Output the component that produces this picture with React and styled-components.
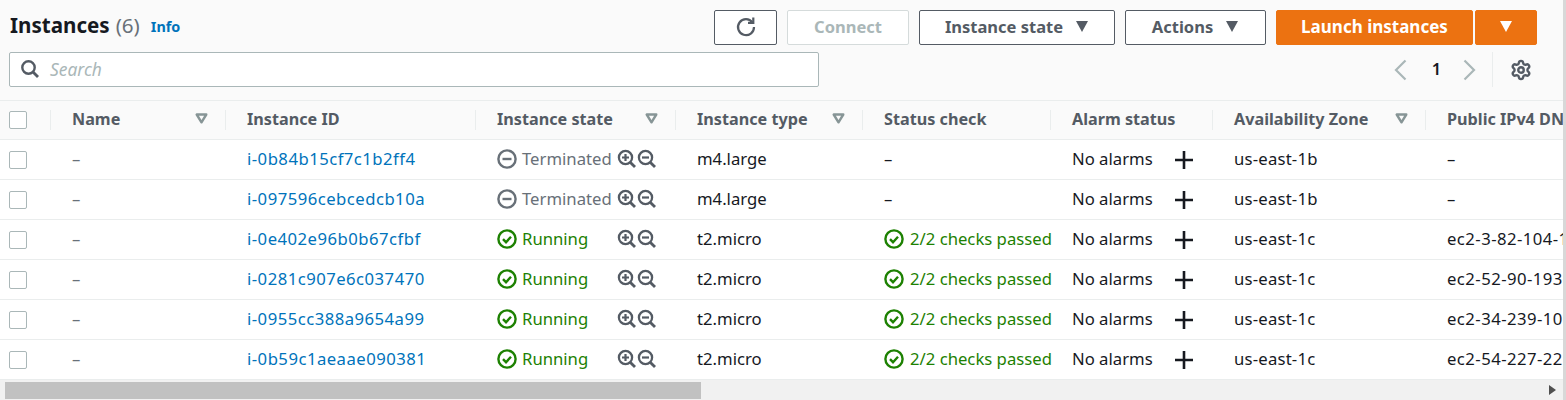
import React from "react";
import styled, { createGlobalStyle } from "styled-components";
import { Settings } from "lucide-react";

const Global = createGlobalStyle`
  html, body { margin: 0; padding: 0; background: #fff; }
  body { font-family: "Noto Sans", "Open Sans", sans-serif; width: 1566px; height: 400px; overflow: hidden; }
`;

const Page = styled.div`
  width: 1566px;
  height: 400px;
  display: flex;
  flex-direction: column;
  overflow: hidden;
  position: relative;
`;
const Head = styled.div`
  height: 100px;
  flex: none;
  box-sizing: border-box;
  background: #fafafa;
  padding: 10px 29px 0 9px;
  display: flex;
  flex-direction: column;
  gap: 7px;
`;
const HeadLine = styled.div`
  display: flex;
  justify-content: space-between;
  align-items: flex-start;
  height: 35px;
`;
const TitleRow = styled.div`
  display: flex;
  align-items: center;
  height: 30px;
  padding-left: 1px;
`;
const Title = styled.h1`
  margin: 0;
  font-size: 20.6px;
  font-weight: 700;
  color: #16191f;
`;
const Count = styled.span`
  font-weight: 400;
  color: #687078;
  margin-left: 6px;
`;
const Info = styled.a`
  font-size: 14.4px;
  font-weight: 700;
  color: #0073bb;
  margin-left: 11px;
  position: relative;
  top: 1px;
`;
const Actions = styled.div`
  display: flex;
  gap: 10px;
  align-items: flex-start;
`;
const Btn = styled.button`
  box-sizing: border-box;
  height: 35px;
  width: ${(p) => p.$w}px;
  margin: 0;
  padding: 0 0 2px;
  font: 700 ${(p) => (p.$primary ? 17 : 16.5)}px "Noto Sans", sans-serif;
  color: ${(p) => (p.$primary ? "#fff" : p.$disabled ? "#aab7b8" : "#545b64")};
  background: ${(p) => (p.$primary ? "#ec7211" : "#fff")};
  border: 1px solid ${(p) => (p.$primary ? "#ec7211" : p.$disabled ? "#d5dbdb" : "#545b64")};
  border-radius: 2px;
  display: flex;
  align-items: center;
  justify-content: center;
  gap: 12px;
`;
const PrimaryGroup = styled.div`
  display: flex;
  gap: 2px;
`;
const SearchBox = styled.div`
  width: 810px;
  height: 35px;
  box-sizing: border-box;
  background: #fff;
  border: 1px solid #aab7b8;
  border-radius: 2px;
  display: flex;
  align-items: center;
  padding: 0 0 2px 10px;
  gap: 10px;
  font-size: 17.4px;
  font-style: italic;
  color: #aab7b8;
`;
const Pager = styled.div`
  display: flex;
  align-items: center;
  height: 35px;
  padding-right: 5px;
  color: #16191f;
  font-size: 16.5px;
  font-weight: 600;
`;
const PageNum = styled.span`
  width: 56px;
  box-sizing: border-box;
  padding-left: 3px;
  text-align: center;
  position: relative;
  top: -1px;
`;
const PagerDivider = styled.span`
  width: 1px;
  height: 35px;
  background: #eaeded;
  margin: 0 17px 0 15px;
`;
const HeaderRow = styled.div`
  display: grid;
  flex: none;
  grid-template-columns: ${(p) => p.$cols};
  height: 40px;
  box-sizing: border-box;
  background: #fafafa;
  border-top: 1px solid #eaeded;
  border-bottom: 1px solid #eaeded;
  width: 1700px;
`;
const HeadCell = styled.div`
  display: flex;
  align-items: center;
  justify-content: space-between;
  padding: 0 18px 3px 21px;
  font-size: 16.2px;
  font-weight: 700;
  color: #545b64;
  position: relative;
  white-space: nowrap;
  &::before {
    content: "";
    position: absolute;
    left: -1px;
    top: 9px;
    bottom: 9px;
    width: 1px;
    background: #eaeded;
  }
`;
const Row = styled.div`
  display: grid;
  flex: none;
  grid-template-columns: ${(p) => p.$cols};
  height: 40px;
  box-sizing: border-box;
  border-bottom: 1px solid #eaeded;
  background: #fff;
  width: 1700px;
  &:last-of-type { border-bottom: 0; }
`;
const Cell = styled.div`
  display: flex;
  align-items: center;
  padding: 0 0 2px 21px;
  font-size: 16.7px;
  letter-spacing: ${(p) => p.$track || 0}px;
  color: ${(p) => p.$color || "#16191f"};
  white-space: nowrap;
  gap: ${(p) => p.$gap || 0}px;
`;
const CheckCell = styled.div`
  display: flex;
  align-items: center;
  padding-left: 9px;
`;
const Box = styled.span`
  width: 18px;
  height: 18px;
  box-sizing: border-box;
  background: #fff;
  border: 1px solid #aab7b8;
  border-radius: 2px;
  display: block;
`;
const StateText = styled.span`
  width: 92px;
  margin-left: 5px;
  flex: none;
`;
const Zooms = styled.span`
  display: flex;
  margin-left: 3px;
`;
const AlarmText = styled.span`
  width: 102px;
  flex: none;
`;
const PlusWrap = styled.span`
  display: flex;
  margin-top: 2px;
`;
const Track = styled.div`
  height: 20px;
  flex: none;
  background: #f1f1f1;
  display: flex;
  align-items: center;
  padding-left: 5px;
  position: relative;
`;
const Thumb = styled.div`
  width: 696px;
  height: 17px;
  background: #c1c1c1;
`;
const Arrow = styled.svg`
  position: absolute;
  left: 1549px;
  top: 5px;
`;
const VEdge = styled.div`
  position: absolute;
  right: 0;
  top: 0;
  bottom: 0;
  width: 3px;
  background: #d8d8d8;
`;

const COLS = "51px 175px 250px 200px 187px 188px 162px 213px 273px";

const Caret = ({ color = "#545b64" }) => (
  <svg width="14" height="11" viewBox="0 0 14 11"><path d="M1 0h12L7 11z" fill={color} /></svg>
);
const SortIcon = () => (
  <svg width="13" height="11" viewBox="0 0 13 11" style={{ flex: "none" }}>
    <path d="M1.7 1.5h9.6L6.5 9.3z" fill="none" stroke="#879596" strokeWidth="2.4" strokeLinejoin="round" />
  </svg>
);
const Check = () => (
  <svg width="20" height="20" viewBox="0 0 20 20" style={{ flex: "none" }}>
    <circle cx="10" cy="10" r="8.6" fill="none" stroke="#1d8102" strokeWidth="2.4" />
    <path d="M6 10.2l3 3 5-5.4" fill="none" stroke="#1d8102" strokeWidth="2.4" />
  </svg>
);
const Minus = () => (
  <svg width="20" height="20" viewBox="0 0 20 20" style={{ flex: "none" }}>
    <circle cx="10" cy="10" r="8.6" fill="none" stroke="#687078" strokeWidth="2.4" />
    <path d="M5.5 10h9" fill="none" stroke="#687078" strokeWidth="2.4" />
  </svg>
);
const ZoomIcon = ({ plus }) => (
  <svg width="20" height="20" viewBox="0 0 20 20" style={{ flex: "none" }}>
    <circle cx="8.5" cy="8.5" r="6.6" fill="none" stroke="#545b64" strokeWidth="2.3" />
    <path d="M13.4 13.4L18 18" fill="none" stroke="#545b64" strokeWidth="2.8" />
    <path d={plus ? "M5 8.5h7M8.5 5v7" : "M5 8.5h7"} fill="none" stroke="#545b64" strokeWidth="2.2" />
  </svg>
);
const Plus = () => (
  <svg width="20" height="20" viewBox="0 0 20 20" style={{ flex: "none" }}>
    <path d="M10 1v18M1 10h18" fill="none" stroke="#16191f" strokeWidth="2.6" />
  </svg>
);

const rows = [
  ["i-0b84b15cf7c1b2ff4", "Terminated", "m4.large", null, "us-east-1b", "–"],
  ["i-097596cebcedcb10a", "Terminated", "m4.large", null, "us-east-1b", "–"],
  ["i-0e402e96b0b67cfbf", "Running", "t2.micro", "2/2 checks passed", "us-east-1c", "ec2-3-82-104-143"],
  ["i-0281c907e6c037470", "Running", "t2.micro", "2/2 checks passed", "us-east-1c", "ec2-52-90-193-10"],
  ["i-0955cc388a9654a99", "Running", "t2.micro", "2/2 checks passed", "us-east-1c", "ec2-34-239-106-2"],
  ["i-0b59c1aeaae090381", "Running", "t2.micro", "2/2 checks passed", "us-east-1c", "ec2-54-227-221-3"],
];

const heads = [
  ["Name", true], ["Instance ID", false], ["Instance state", true], ["Instance type", true],
  ["Status check", false], ["Alarm status", false], ["Availability Zone", true], ["Public IPv4 DNS", false],
];

export default function App() {
  return (
    <Page>
      <Global />
      <Head>
        <HeadLine>
          <TitleRow>
            <Title>Instances<Count>(6)</Count></Title>
            <Info>Info</Info>
          </TitleRow>
          <Actions>
            <Btn $w={63}>
              <svg width="22" height="22" viewBox="0 0 22 22">
                <path d="M17.5 6.5A8 8 0 1 0 19 11" fill="none" stroke="#545b64" strokeWidth="2.2" />
                <path d="M13 6.8h5.3V1.5" fill="none" stroke="#545b64" strokeWidth="2.2" />
              </svg>
            </Btn>
            <Btn $w={122} $disabled>Connect</Btn>
            <Btn $w={196}>Instance state <Caret /></Btn>
            <Btn $w={141}>Actions <Caret /></Btn>
            <PrimaryGroup>
              <Btn $w={197} $primary>Launch instances</Btn>
              <Btn $w={62} $primary><Caret color="#fff" /></Btn>
            </PrimaryGroup>
          </Actions>
        </HeadLine>
        <HeadLine>
          <SearchBox>
            <svg width="20" height="20" viewBox="0 0 20 20" style={{ flex: "none" }}>
              <circle cx="8.5" cy="8.5" r="6.2" fill="none" stroke="#545b64" strokeWidth="2.4" />
              <path d="M13 13l5 5" fill="none" stroke="#545b64" strokeWidth="2.8" />
            </svg>
            Search
          </SearchBox>
          <Pager>
            <svg width="14" height="22" viewBox="0 0 14 22"><path d="M12.5 1.5L3 11l9.5 9.5" fill="none" stroke="#aab7b8" strokeWidth="2.2" /></svg>
            <PageNum>1</PageNum>
            <svg width="14" height="22" viewBox="0 0 14 22"><path d="M1.5 1.5L11 11l-9.5 9.5" fill="none" stroke="#aab7b8" strokeWidth="2.2" /></svg>
            <PagerDivider />
            <Settings size={22} color="#545b64" strokeWidth={2.6} />
          </Pager>
        </HeadLine>
      </Head>
      <HeaderRow $cols={COLS}>
        <CheckCell><Box /></CheckCell>
        {heads.map(([t, s]) => (
          <HeadCell key={t}>{t}{s && <SortIcon />}</HeadCell>
        ))}
      </HeaderRow>
      {rows.map((r) => {
        const run = r[1] === "Running";
        return (
          <Row key={r[0]} $cols={COLS}>
            <CheckCell><Box /></CheckCell>
            <Cell $color="#687078">–</Cell>
            <Cell $color="#0073bb" $track={0.47}>{r[0]}</Cell>
            <Cell $color={run ? "#1d8102" : "#687078"}>
              {run ? <Check /> : <Minus />}
              <StateText>{r[1]}</StateText>
              <Zooms><ZoomIcon plus /><ZoomIcon /></Zooms>
            </Cell>
            <Cell>{r[2]}</Cell>
            {r[3] ? <Cell $color="#1d8102" $gap={6}><Check />{r[3]}</Cell> : <Cell>–</Cell>}
            <Cell><AlarmText>No alarms</AlarmText><PlusWrap><Plus /></PlusWrap></Cell>
            <Cell $track={0.2}>{r[4]}</Cell>
            <Cell $track={0.45}>{r[5]}</Cell>
          </Row>
        );
      })}
      <Track>
        <Thumb />
        <Arrow width="7" height="10" viewBox="0 0 7 10"><path d="M0 0l7 5-7 5z" fill="#505050" /></Arrow>
      </Track>
      <VEdge />
    </Page>
  );
}
